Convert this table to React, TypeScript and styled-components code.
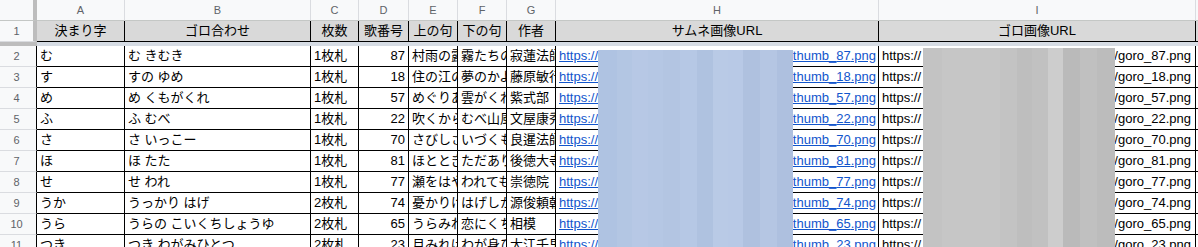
import React from "react";
import styled, { createGlobalStyle } from "styled-components";

const GlobalStyle = createGlobalStyle`
	html, body {
		margin: 0;
		padding: 0;
		background: #ffffff;
		overflow: hidden;
	}
`;

const FONT = `"Liberation Sans", "Noto Sans CJK JP", "Noto Sans", sans-serif`;
const COLS = "37px 88px 186px 48px 50px 49px 49px 49px 323px 317px 60px";

const Sheet = styled.div`
	position: relative;
	width: 1198px;
	height: 247px;
	overflow: hidden;
	font-family: ${FONT};
	font-size: 13px;
	color: #000;
`;

const Row = styled.div<{ $height: number }>`
	display: grid;
	grid-template-columns: ${COLS};
	height: ${(p) => p.$height}px;
	width: max-content;
`;

const Letter = styled.div<{ $corner?: boolean }>`
	box-sizing: border-box;
	background: #f8f9fa;
	border-bottom: 1px solid #c4c7c5;
	border-right: ${(p) => (p.$corner ? "4px solid #bdbdbd" : "1px solid #dadce0")};
	color: #5f6368;
	font-size: 11px;
	line-height: 20px;
	text-align: center;
`;

const RowNum = styled.div<{ $frozen?: boolean }>`
	box-sizing: border-box;
	background: #f8f9fa;
	border-right: ${(p) => (p.$frozen ? "4px solid #bdbdbd" : "1px solid #000")};
	border-bottom: 1px solid #dadce0;
	color: #5f6368;
	font-size: 11px;
	line-height: 20px;
	text-align: center;
	padding-right: ${(p) => (p.$frozen ? "0" : "3px")};
`;

const HeadCell = styled.div`
	box-sizing: border-box;
	background: #d9d9d9;
	border-right: 1px solid #000;
	border-bottom: 1px solid #000;
	line-height: 20px;
	text-align: center;
	white-space: nowrap;
	overflow: hidden;
`;

const FreezeCell = styled.div<{ $side?: boolean }>`
	background: ${(p) => (p.$side ? "#bdbdbd" : "#d6dce4")};
`;

const Cell = styled.div<{ $align?: "left" | "right" }>`
	box-sizing: border-box;
	border-right: 1px solid #000;
	border-bottom: 1px solid #000;
	padding: 0 3px;
	line-height: 20px;
	text-align: ${(p) => p.$align || "left"};
	white-space: nowrap;
	overflow: hidden;
`;

const UrlCell = styled(Cell)<{ $padRight: number }>`
	display: flex;
	justify-content: space-between;
	padding: 0 ${(p) => p.$padRight}px 0 3px;
`;

const Link = styled.span`
	color: #1155cc;
	text-decoration: underline;
`;

const Blur = styled.div<{ $left: number; $top: number; $width: number; $stripes: string }>`
	position: absolute;
	left: ${(p) => p.$left}px;
	top: ${(p) => p.$top}px;
	width: ${(p) => p.$width}px;
	bottom: 0;
	background: ${(p) => p.$stripes};
`;

const blueStripes = `linear-gradient(90deg,
	#afc3e2 0px, #afc3e2 19px,
	#b3c6e3 19px, #b3c6e3 34px,
	#b7c8e5 34px, #b7c8e5 50px,
	#b5c7e4 50px, #b5c7e4 65px,
	#b3c5e2 65px, #b3c5e2 82px,
	#b6c8e5 82px, #b6c8e5 99px,
	#afc2e0 99px, #afc2e0 115px,
	#b9cae6 115px, #b9cae6 130px,
	#b8c9e6 130px, #b8c9e6 145px,
	#afc1df 145px, #afc1df 162px,
	#b5c6e3 162px, #b5c6e3 179px,
	#aec0df 179px, #aec0df 195px)`;

const grayStripes = `linear-gradient(90deg,
	#c3c3c3 0px, #c3c3c3 19px,
	#c6c6c6 19px, #c6c6c6 77px,
	#c3c3c3 77px, #c3c3c3 94px,
	#bebebe 94px, #bebebe 109px,
	#c1c1c1 109px, #c1c1c1 125px,
	#cdcdcd 125px, #cdcdcd 140px,
	#bababa 140px, #bababa 157px,
	#c0c0c0 157px, #c0c0c0 174px,
	#bcbcbc 174px, #bcbcbc 192px)`;

const letters = ["A", "B", "C", "D", "E", "F", "G", "H", "I", ""];
const headers = ["決まり字", "ゴロ合わせ", "枚数", "歌番号", "上の句", "下の句", "作者", "サムネ画像URL", "ゴロ画像URL", ""];

const rows = [
	["む", "む きむき", "1枚札", 87, "村雨の露も", "霧たちのぼる", "寂蓮法師"],
	["す", "すの ゆめ", "1枚札", 18, "住の江の", "夢のかよひ路", "藤原敏行朝臣"],
	["め", "め くもがくれ", "1枚札", 57, "めぐりあひて", "雲がくれにし", "紫式部"],
	["ふ", "ふ むべ", "1枚札", 22, "吹くからに", "むべ山風を", "文屋康秀"],
	["さ", "さ いっこー", "1枚札", 70, "さびしさに", "いづくも同じ", "良暹法師"],
	["ほ", "ほ たた", "1枚札", 81, "ほととぎす", "ただありあけの", "後徳大寺左大臣"],
	["せ", "せ われ", "1枚札", 77, "瀬をはやみ", "われても末に", "崇徳院"],
	["うか", "うっかり はげ", "2枚札", 74, "憂かりける", "はげしかれとは", "源俊頼朝臣"],
	["うら", "うらの こいくちしょうゆ", "2枚札", 65, "うらみわび", "恋にくちなむ", "相模"],
	["つき", "つき わがみひとつ", "2枚札", 23, "月みれば", "わが身ひとつの", "大江千里"],
];

const App: React.FC = () => {
	return (
		<Sheet>
			<GlobalStyle />
			<Row $height={21}>
				<Letter $corner />
				{letters.map((l, i) => (
					<Letter key={i}>{l}</Letter>
				))}
			</Row>
			<Row $height={21}>
				<RowNum $frozen>1</RowNum>
				{headers.map((h, i) => (
					<HeadCell key={i}>{h}</HeadCell>
				))}
			</Row>
			<Row $height={4}>
				<FreezeCell $side />
				{letters.map((_, i) => (
					<FreezeCell key={i} />
				))}
			</Row>
			{rows.map((r, i) => {
				const no = r[3];
				return (
					<Row $height={21} key={i}>
						<RowNum>{i + 2}</RowNum>
						<Cell>{r[0]}</Cell>
						<Cell>{r[1]}</Cell>
						<Cell>{r[2]}</Cell>
						<Cell $align="right">{no}</Cell>
						<Cell>{r[4]}</Cell>
						<Cell>{r[5]}</Cell>
						<Cell>{r[6]}</Cell>
						<UrlCell $padRight={2}>
							<Link>https://</Link>
							<Link>/thumb_{no}.png</Link>
						</UrlCell>
						<UrlCell $padRight={4}>
							<span>https://</span>
							<span>/goro_{no}.png</span>
						</UrlCell>
						<Cell />
					</Row>
				);
			})}
			{/* blurred parts of the URLs */}
			<Blur $left={598} $top={50} $width={195} $stripes={blueStripes} />
			<Blur $left={923} $top={48} $width={192} $stripes={grayStripes} />
		</Sheet>
	);
};

export default App;
